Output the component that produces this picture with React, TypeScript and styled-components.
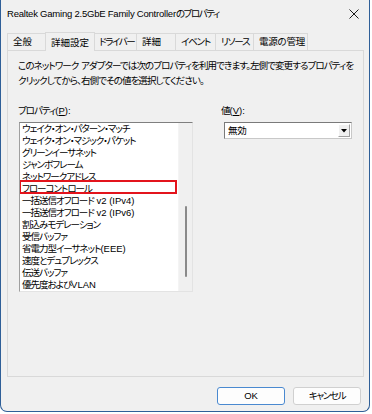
import React from "react";
import styled, { createGlobalStyle } from "styled-components";

const GlobalStyle = createGlobalStyle`
  html, body { margin: 0; padding: 0; background: #ffffff; }
  body {
    font-family: "Liberation Sans", "Noto Sans CJK JP", sans-serif;
    font-size: 9.5px;
    color: #000000;
    font-feature-settings: "palt";
  }
  * { box-sizing: border-box; }
`;

const Latin = styled.span<{ $ls?: number }>`
  letter-spacing: ${(p) => p.$ls ?? 0}px;
`;

function JText({ text, latinLs = 0 }: { text: string; latinLs?: number }) {
  const parts = text.split(/([\x20-\x7e]+)/);
  return (
    <>
      {parts.map((p, i) =>
        p === "" ? null : /^[\x20-\x7e]+$/.test(p) ? (
          <Latin key={i} $ls={latinLs}>
            {p}
          </Latin>
        ) : (
          <React.Fragment key={i}>{p}</React.Fragment>
        )
      )}
    </>
  );
}

const Window = styled.div`
  width: 370px;
  height: 412px;
  display: flex;
  flex-direction: column;
  background: #f0f0f0;
  border: 1px solid #2f5f98;
  border-top: none;
  border-radius: 0 0 7px 7px;
  overflow: hidden;
`;

const TitleBar = styled.div`
  height: 28px;
  display: flex;
  align-items: center;
  justify-content: space-between;
  padding: 0 6px 0 6px;
  background: #f0f0f0;
`;

const TitleText = styled.span`
  line-height: 14px;
  white-space: nowrap;
  letter-spacing: -1.4px;
`;

const CloseButton = styled.div`
  width: 14px;
  height: 14px;
  display: flex;
  align-items: center;
  justify-content: center;
  margin-right: 2px;
`;

const Body = styled.div`
  flex: 1;
  display: flex;
  flex-direction: column;
  padding: 4px 5px 0 6px;
`;

const TabStrip = styled.div`
  display: flex;
  align-items: flex-end;
  height: 19px;
  margin-bottom: -1px;
  position: relative;
  z-index: 1;
`;

const Tab = styled.div<{ $w: number; $active?: boolean; $ls: number }>`
  width: ${(p) => p.$w + (p.$active ? 4 : 1)}px;
  height: ${(p) => (p.$active ? 19 : 17)}px;
  margin: 0 ${(p) => (p.$active ? -2 : -1)}px ${(p) => (p.$active ? 0 : 1)}px
    ${(p) => (p.$active ? -2 : 0)}px;
  display: flex;
  align-items: center;
  justify-content: flex-start;
  padding: ${(p) => (p.$active ? "1px 0 0 5px" : "0 0 0 5px")};
  border: 1px solid #d9d9d9;
  border-bottom: none;
  background: #f0f0f0;
  position: relative;
  z-index: ${(p) => (p.$active ? 2 : 1)};
  white-space: nowrap;
  line-height: 14px;
  letter-spacing: ${(p) => p.$ls}px;
`;

const Panel = styled.div`
  height: 327px;
  border: 1px solid #d9d9d9;
  background: #f0f0f0;
  padding: 7px 10px 0 10px;
  display: flex;
  flex-direction: column;
`;

const Description = styled.div`
  line-height: 15px;
  white-space: nowrap;
  letter-spacing: -0.9px;
`;

const Columns = styled.div`
  display: grid;
  grid-template-columns: 175px 131px;
  column-gap: 28px;
  margin-top: 16px;
`;

const Column = styled.div`
  display: flex;
  flex-direction: column;
`;

const Label = styled.div`
  line-height: 14px;
  height: 14px;
  white-space: nowrap;
  letter-spacing: -1px;
`;

const ListBox = styled.div`
  margin-top: 4px;
  margin-left: 1px;
  width: 174px;
  height: 170px;
  display: flex;
  background: #ffffff;
  border-top: 1px solid #7f7f7f;
  border-left: 1px solid #a0a0a0;
  border-right: 1px solid #e3e3e3;
  border-bottom: 1px solid #e3e3e3;
`;

const Items = styled.div`
  flex: 1;
  position: relative;
  overflow: hidden;
`;

const Item = styled.div`
  height: 12px;
  line-height: 12px;
  padding-left: 2px;
  white-space: nowrap;
  letter-spacing: -1px;
`;

const Highlight = styled.div`
  position: absolute;
  left: -1px;
  top: 57px;
  width: 158px;
  height: 14px;
  border: 2px solid #e3141c;
  pointer-events: none;
`;

const ScrollTrack = styled.div`
  width: 14px;
  background: #f0f0f0;
  padding: 83px 0 0 6px;
  border-left: 1px solid #f4f4f4;
`;

const ScrollThumb = styled.div`
  width: 2px;
  height: 71px;
  border-radius: 1px;
  background: #8a8a8a;
`;

const Combo = styled.div`
  margin-top: 4px;
  margin-left: 3px;
  width: 128px;
  height: 17px;
  display: flex;
  align-items: center;
  justify-content: space-between;
  background: #ffffff;
  border-top: 1px solid #7a7a7a;
  border-left: 1px solid #7a7a7a;
  border-right: 1px solid #c8c8c8;
  border-bottom: 1px solid #c8c8c8;
  padding: 0 1px 0 3px;
`;

const ComboText = styled.span`
  line-height: 14px;
  letter-spacing: -0.3px;
`;

const ComboArrow = styled.div`
  width: 12px;
  height: 13px;
  display: flex;
  align-items: center;
  justify-content: center;
  background: #f0f0f0;
  border-top: 1px solid #ffffff;
  border-left: 1px solid #ffffff;
  border-right: 1px solid #a0a0a0;
  border-bottom: 1px solid #a0a0a0;
`;

const Footer = styled.div`
  display: flex;
  justify-content: flex-end;
  gap: 8px;
  padding: 10px 3px 0 0;
`;

const Button = styled.div<{ $primary?: boolean }>`
  width: 68px;
  height: 18px;
  display: flex;
  align-items: center;
  justify-content: center;
  border-radius: 3px;
  background: #fdfdfd;
  border: 1px solid ${(p) => (p.$primary ? "#4a89d0" : "#d0d0d0")};
  line-height: 14px;
  letter-spacing: -1.3px;
`;

const tabs = [
  { label: "全般", w: 40, ls: 0 },
  { label: "詳細設定", w: 46, active: true, ls: 0 },
  { label: "ドライバー", w: 43, ls: -1.4 },
  { label: "詳細", w: 39, ls: 0 },
  { label: "イベント", w: 40, ls: -1.2 },
  { label: "リソース", w: 38, ls: -1.2 },
  { label: "電源の管理", w: 54, ls: -0.25 },
];

const items = [
  "ウェイク・オン・パターン・マッチ",
  "ウェイク・オン・マジック・パケット",
  "グリーンイーサネット",
  "ジャンボフレーム",
  "ネットワークアドレス",
  "フローコントロール",
  "一括送信オフロード v2 (IPv4)",
  "一括送信オフロード v2 (IPv6)",
  "割込みモデレーション",
  "受信バッファ",
  "省電力型イーサネット(EEE)",
  "速度とデュプレックス",
  "伝送バッファ",
  "優先度およびVLAN",
];

export default function App() {
  return (
    <>
      <GlobalStyle />
      <Window>
        <TitleBar>
          <TitleText>
            <JText text="Realtek Gaming 2.5GbE Family Controllerのプロパティ" latinLs={-0.22} />
          </TitleText>
          <CloseButton>
            <svg width="10" height="10" viewBox="0 0 10 10">
              <path d="M0.5 0.5 L9.5 9.5 M9.5 0.5 L0.5 9.5" stroke="#1b1b1b" strokeWidth="1" fill="none" />
            </svg>
          </CloseButton>
        </TitleBar>
        <Body>
          <TabStrip>
            {tabs.map((t) => (
              <Tab key={t.label} $w={t.w} $active={t.active} $ls={t.ls}>
                {t.label}
              </Tab>
            ))}
          </TabStrip>
          <Panel>
            <Description>
              <JText text="このネットワーク アダプターでは次のプロパティを利用できます。左側で変更するプロパティを" />
              <br />
              クリックしてから、右側でその値を選択してください。
            </Description>
            <Columns>
              <Column>
                <Label>
                  プロパティ
                  <Latin>
                    (<u>P</u>):
                  </Latin>
                </Label>
                <ListBox>
                  <Items>
                    {items.map((it) => (
                      <Item key={it}>
                        <JText text={it} />
                      </Item>
                    ))}
                    <Highlight />
                  </Items>
                  <ScrollTrack>
                    <ScrollThumb />
                  </ScrollTrack>
                </ListBox>
              </Column>
              <Column>
                <Label>
                  値
                  <Latin>
                    (<u>V</u>):
                  </Latin>
                </Label>
                <Combo>
                  <ComboText>無効</ComboText>
                  <ComboArrow>
                    <svg width="6" height="4" viewBox="0 0 6 4">
                      <path d="M0 0 L6 0 L3 3.5 Z" fill="#000" />
                    </svg>
                  </ComboArrow>
                </Combo>
              </Column>
            </Columns>
          </Panel>
          <Footer>
            <Button $primary>
              <Latin>OK</Latin>
            </Button>
            <Button>キャンセル</Button>
          </Footer>
        </Body>
      </Window>
    </>
  );
}
